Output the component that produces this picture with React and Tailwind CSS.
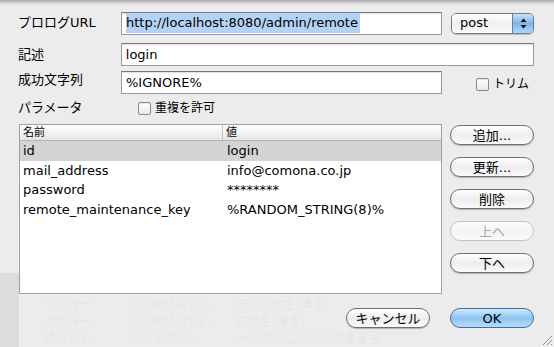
import React from 'react';

const font = { fontFamily: '"DejaVu Sans", "Noto Sans CJK JP", sans-serif' };

const rows = [
  { name: 'id', value: 'login', selected: true },
  { name: 'mail_address', value: 'info@comona.co.jp' },
  { name: 'password', value: '********' },
  { name: 'remote_maintenance_key', value: '%RANDOM_STRING(8)%' },
];

const AquaButton = ({ children, disabled, blue, className = '' }) => (
  <button
    className={`h-[20px] rounded-full border text-[13px] leading-none flex items-center justify-center ${
      blue
        ? 'border-[#3d6ea8] bg-gradient-to-b from-[#d2eafd] via-[#8cc3f1] to-[#b6dcfb] text-black'
        : disabled
        ? 'border-[#c4c4c4] bg-gradient-to-b from-[#fdfdfd] via-[#f3f3f3] to-[#fafafa] text-[#a8a8a8]'
        : 'border-[#707070] bg-gradient-to-b from-white via-[#ededed] to-[#fafafa] text-black shadow-[0_1px_1px_rgba(0,0,0,0.25)]'
    } ${className}`}
  >
    {children}
  </button>
);

const Check = () => (
  <span className="w-[13px] h-[13px] rounded-[2px] border border-[#8a8a8a] bg-gradient-to-b from-white to-[#e9e9e9] shadow-[inset_0_1px_1px_rgba(0,0,0,0.1)]" />
);

const TextInput = ({ children, className = '' }) => (
  <div className={`h-[23px] border border-[#9a9a9a] border-t-[#7a7a7a] bg-white flex items-center px-[4px] text-[13px] shadow-[inset_0_1px_1px_rgba(0,0,0,0.12)] ${className}`}>
    {children}
  </div>
);

export default function App() {
  return (
    <div className="relative w-[554px] h-[347px] overflow-hidden bg-[#ececec] text-black" style={font}>
      {/* sheet edge shadow */}
      <div className="absolute top-0 left-0 right-0 h-[6px] bg-gradient-to-b from-[#a9a9a9] via-[#d6d6d6] to-transparent" />

      {/* ghost of the window behind */}
      <div className="absolute left-0 top-[273px] w-[19px] h-[74px] bg-[#dcdcdc]" />
      <div className="absolute left-[44px] top-[297px] text-[12px] leading-[17px] text-black/[0.045]">
        <div className="flex gap-[18px]"><span className="w-[66px]">クウォー…</span><span className="w-[90px]">%FORMAT(re...</span><span>市区町村名(漢字)</span></div>
        <div className="flex gap-[18px]"><span className="w-[66px]">クウォー…</span><span className="w-[90px]">%FORMAT(re...</span><span>町域名(漢字)</span></div>
        <div className="flex gap-[18px]"><span className="w-[66px]">読み無し</span><span className="w-[90px]">%IGNORE%</span><span>一町域が二以上の郵便番号…</span></div>
      </div>

      <div className="relative pt-[11px] pl-[18px] pr-[20px]">
        {/* row 1 */}
        <div className="flex items-center h-[24px]">
          <div className="w-[103px] text-[13px]">プロログURL</div>
          <TextInput className="w-[321px] border-[#5c8bc6] shadow-[0_0_0_2px_rgba(110,160,225,0.75),0_0_3px_3px_rgba(120,170,230,0.45)]">
            <span className="bg-[#b4d2f5] pr-[2px]">http://localhost:8080/admin/remote</span>
          </TextInput>
          <div className="ml-[9px] w-[83px] h-[21px] rounded-[5px] border border-[#7a7a7a] flex overflow-hidden shadow-[0_1px_1px_rgba(0,0,0,0.2)]">
            <div className="flex-1 bg-gradient-to-b from-white via-[#f0f0f0] to-[#fafafa] text-[13px] pl-[8px] flex items-center">post</div>
            <div className="w-[21px] border-l border-[#5e7fae] bg-gradient-to-b from-[#c9e2fa] via-[#7eb6ec] to-[#aed5fa] flex items-center justify-center">
              <svg width="7" height="11" viewBox="0 0 7 11">
                <path d="M3.5 0.5 L6.5 4 L0.5 4 Z" fill="#111" />
                <path d="M3.5 10.5 L6.5 7 L0.5 7 Z" fill="#111" />
              </svg>
            </div>
          </div>
        </div>

        {/* row 2 */}
        <div className="flex items-center h-[23px] mt-[8px]">
          <div className="w-[103px] text-[13px]">記述</div>
          <TextInput className="w-[414px]">login</TextInput>
        </div>

        {/* row 3 */}
        <div className="flex items-center h-[23px] mt-[5px]">
          <div className="w-[103px] text-[13px] -mt-[5px]">成功文字列</div>
          <TextInput className="w-[321px]">%IGNORE%</TextInput>
          <label className="ml-[34px] flex items-center gap-[4px] text-[12px] mt-[3px]">
            <Check />
            トリム
          </label>
        </div>

        {/* row 4 */}
        <div className="flex items-center h-[20px] mt-[4px]">
          <div className="w-[120px] text-[13px]">パラメータ</div>
          <label className="flex items-center gap-[4px] text-[12px]">
            <Check />
            重複を許可
          </label>
        </div>

        {/* table + side buttons */}
        <div className="flex mt-[6px] pl-[1px]">
          <div className="w-[423px] h-[170px] border border-[#a0a0a0] bg-white text-[13px]">
            <div className="h-[16px] flex text-[11px] bg-gradient-to-b from-white via-[#f3f3f3] to-[#e4e4e4] border-b border-[#b5b5b5]">
              <div className="w-[203px] pl-[3px] border-r border-[#c4c4c4] leading-[16px]">名前</div>
              <div className="pl-[3px] leading-[16px]">値</div>
            </div>
            {rows.map((r) => (
              <div key={r.name} className={`h-[19.5px] flex items-center ${r.selected ? 'bg-[#d4d4d4]' : ''}`}>
                <div className="w-[204px] pl-[3px]">{r.name}</div>
                <div className="pl-[3px]">{r.value}</div>
              </div>
            ))}
          </div>

          <div className="ml-[8px] w-[84px] flex flex-col gap-[12px] pt-[1px]">
            <AquaButton>追加...</AquaButton>
            <AquaButton>更新...</AquaButton>
            <AquaButton>削除</AquaButton>
            <AquaButton disabled>上へ</AquaButton>
            <AquaButton>下へ</AquaButton>
          </div>
        </div>

        {/* bottom buttons */}
        <div className="flex justify-end gap-[20px] mt-[14px]">
          <AquaButton className="w-[84px]">キャンセル</AquaButton>
          <AquaButton blue className="w-[84px]">OK</AquaButton>
        </div>
      </div>

      {/* resize grip */}
      <svg className="absolute right-[1px] bottom-[1px]" width="12" height="12" viewBox="0 0 12 12">
        <path d="M11 2 L2 11 M11 6 L6 11 M11 10 L10 11" stroke="#8a8a8a" strokeWidth="1" />
        <path d="M11.8 2.8 L2.8 11.8 M11.8 6.8 L6.8 11.8" stroke="#fff" strokeWidth="0.8" />
      </svg>
    </div>
  );
}
